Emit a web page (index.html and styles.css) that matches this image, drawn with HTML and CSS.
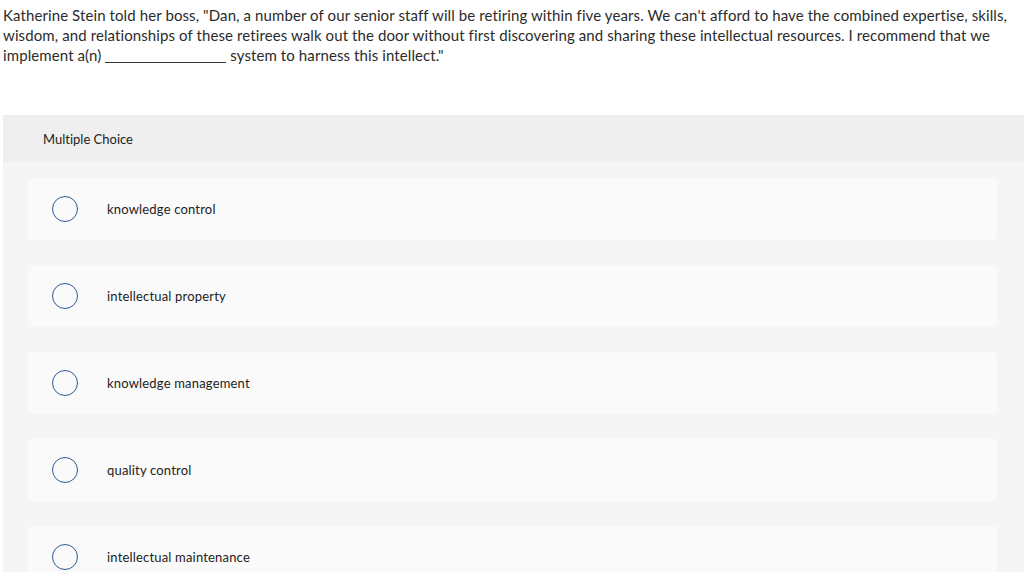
FILE: index.html
```html
<!DOCTYPE html>
<html>
<head>
<meta charset="utf-8">
<link rel="stylesheet" href="styles.css">
</head>
<body>
<div class="question">Katherine Stein told her boss, "Dan, a number of our senior staff will be retiring within five years. We can't afford to have the combined expertise, skills, wisdom, and relationships of these retirees walk out the door without first discovering and sharing these intellectual resources. I recommend that we implement a(n) <span class="blank"></span> system to harness this intellect."</div>
<div class="panel">
  <div class="panel-head">Multiple Choice</div>
  <div class="choices">
    <div class="choice"><span class="radio"></span><span class="label">knowledge control</span></div>
    <div class="choice"><span class="radio"></span><span class="label">intellectual property</span></div>
    <div class="choice"><span class="radio"></span><span class="label">knowledge management</span></div>
    <div class="choice"><span class="radio"></span><span class="label">quality control</span></div>
    <div class="choice"><span class="radio"></span><span class="label">intellectual maintenance</span></div>
  </div>
</div>
</body>
</html>
```
FILE: styles.css
```css
html, body {
  margin: 0;
  padding: 0;
  background: #fff;
}
body {
  font-family: "Lato", "Open Sans", sans-serif;
  font-variant-ligatures: none;
  color: #2b2b2b;
}
.question {
  font-size: 15px;
  letter-spacing: 0.1px;
  line-height: 20px;
  padding: 5px 8px 0 3px;
}
.blank {
  display: inline-block;
  width: 121px;
  border-bottom: 1px solid #333;
  vertical-align: -2px;
}
.panel {
  margin: 50px 0 0 3px;
  height: 457px;
  overflow: hidden;
  background: #f5f5f5;
}
.panel-head {
  height: 47px;
  display: flex;
  align-items: center;
  padding-left: 40px;
  background: #efefef;
  font-size: 13px;
  color: #222;
}
.choices {
  display: flex;
  flex-direction: column;
  gap: 25px;
  padding: 16px 27px 0 25px;
}
.choice {
  flex: 0 0 62px;
  height: 62px;
  display: flex;
  align-items: center;
  background: #fafafa;
  border-radius: 4px;
}
.radio {
  width: 24px;
  height: 24px;
  border: 1.3px solid #2f5a94;
  border-radius: 50%;
  margin-left: 24px;
  flex: 0 0 auto;
}
.label {
  margin-left: 29px;
  font-size: 13px;
  letter-spacing: 0.18px;
  color: #222;
}
```
